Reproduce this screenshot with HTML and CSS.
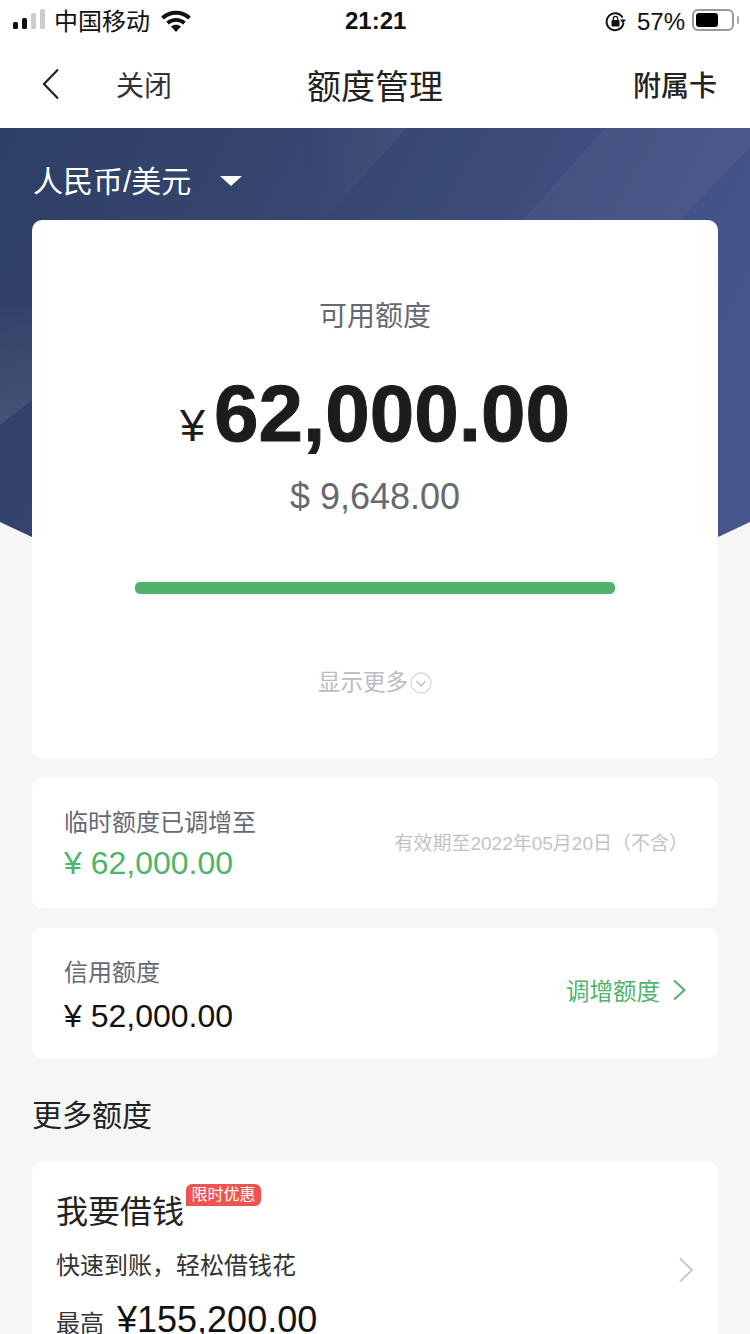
FILE: index.html
```html
<!DOCTYPE html>
<html lang="zh-CN">
<head>
    <meta charset="UTF-8">
    <meta name="viewport" content="width=device-width, initial-scale=1.0">
    <title>额度管理</title>
    <link rel="stylesheet" href="styles.css">
</head>
<body>
    <div class="status-bar">
        <div class="status-left">
            <div class="signal">
                <span class="bar bar-1"></span>
                <span class="bar bar-2"></span>
                <span class="bar bar-3"></span>
                <span class="bar bar-4"></span>
            </div>
            <span class="carrier">中国移动</span>
            <svg class="wifi" width="30" height="22" viewBox="0 0 30 22">
                <path d="M1.500 8C9 1 21 1 28.500 8" fill="none" stroke="#111" stroke-width="4"/>
                <path d="M6.500 13C11.500 8.800 18.500 8.800 23.500 13" fill="none" stroke="#111" stroke-width="3.800"/>
                <path d="M10 16.500C13 14 17 14 20 16.500L15 22Z" fill="#111"/>
            </svg>
        </div>
        <span class="time">21:21</span>
        <div class="status-right">
            <svg class="lock" width="21" height="21" viewBox="0 0 21 21">
                <path d="M17.500 6.500A8.500 8.500 0 1 0 18.500 12" fill="none" stroke="#111" stroke-width="2"/>
                <path d="M15 8.500H21L18 12.500Z" fill="#111"/>
                <rect x="6.500" y="9" width="8" height="6.500" rx="1" fill="#111"/>
                <path d="M8.300 9V7.500A2.200 2.200 0 0 1 12.700 7.500V9" fill="none" stroke="#111" stroke-width="1.300"/>
            </svg>
            <span class="percent">57%</span>
            <div class="battery"><span class="battery-level"></span></div>
            <span class="battery-nub"></span>
        </div>
    </div>

    <header class="nav">
        <div class="nav-left">
            <svg class="back" width="18" height="32" viewBox="0 0 18 32">
                <path d="M16 1.500L2 16L16 30.500" fill="none" stroke="#222" stroke-width="2.200"/>
            </svg>
            <span class="close">关闭</span>
        </div>
        <h1 class="nav-title">额度管理</h1>
        <div class="nav-right">附属卡</div>
    </header>

    <section class="banner">
        <svg class="banner-bg" width="750" height="486" viewBox="0 0 750 486">
            <defs>
                <linearGradient id="bannerFill" x1="0" y1="0" x2="1" y2="0.35">
                    <stop offset="0" stop-color="#2e3f65"/>
                    <stop offset="0.45" stop-color="#374771"/>
                    <stop offset="1" stop-color="#46558c"/>
                </linearGradient>
                <linearGradient id="facetSide" x1="0" y1="0" x2="1" y2="0">
                    <stop offset="0" stop-color="#fff" stop-opacity="0"/>
                    <stop offset="1" stop-color="#fff" stop-opacity="0.05"/>
                </linearGradient>
                <linearGradient id="facetLow" x1="0" y1="0" x2="0" y2="1">
                    <stop offset="0" stop-color="#fff" stop-opacity="0"/>
                    <stop offset="1" stop-color="#fff" stop-opacity="0.09"/>
                </linearGradient>
            </defs>
            <path d="M0 0H750V394Q375 578 0 394Z" fill="url(#bannerFill)"/>
            <path d="M300 0H407L323 92H300Z" fill="url(#facetSide)"/>
            <path d="M605 0H750V19L680 92H523Z" fill="#fff" opacity="0.04"/>
            <path d="M0 170H32V272L0 297Z" fill="url(#facetLow)"/>
        </svg>
        <div class="currency">
            <span>人民币/美元</span>
            <span class="currency-arrow"></span>
        </div>
    </section>

    <main class="content">
        <section class="card main-card">
            <div class="main-label">可用额度</div>
            <div class="main-amount"><span class="main-yen">¥</span>62,000.00</div>
            <div class="main-usd">$ 9,648.00</div>
            <div class="progress"></div>
            <div class="show-more">
                <span>显示更多</span>
                <svg width="22" height="22" viewBox="0 0 22 22">
                    <circle cx="11" cy="11" r="10" fill="none" stroke="#d9dadc" stroke-width="1.300"/>
                    <path d="M6.500 9L11 14L15.500 9" fill="none" stroke="#bbbcbf" stroke-width="1.300"/>
                </svg>
            </div>
        </section>

        <section class="card row-card">
            <div>
                <div class="row-label">临时额度已调增至</div>
                <div class="row-amount green">¥ 62,000.00</div>
            </div>
            <div class="row-note">有效期至2022年05月20日（不含）</div>
        </section>

        <section class="card row-card credit-card">
            <div>
                <div class="row-label">信用额度</div>
                <div class="row-amount credit-amount">¥ 52,000.00</div>
            </div>
            <div class="row-link">
                <span>调增额度</span>
                <svg width="14" height="22" viewBox="0 0 14 22">
                    <path d="M2 1.500L12.500 11L2 20.500" fill="none" stroke="#4fb36c" stroke-width="2"/>
                </svg>
            </div>
        </section>

        <h2 class="section-title">更多额度</h2>

        <section class="card loan-card">
            <div class="loan-head">
                <span class="loan-title">我要借钱</span>
                <span class="loan-badge">限时优惠</span>
            </div>
            <div class="loan-desc">快速到账，轻松借钱花</div>
            <div class="loan-max">
                <span class="loan-max-label">最高</span>
                <span class="loan-max-value">¥155,200.00</span>
            </div>
            <svg class="loan-arrow" width="16" height="26" viewBox="0 0 16 26">
                <path d="M2 1.500L14 13L2 24.500" fill="none" stroke="#c9c9cc" stroke-width="2"/>
            </svg>
        </section>
    </main>
</body>
</html>
```

FILE: styles.css
```css
html, body {
    margin: 0;
    padding: 0;
    height: 1334px;
    overflow: hidden;
}
body {
    font-family: "Liberation Sans", "Noto Sans CJK SC", sans-serif;
    background-color: #f6f6f6;
    color: #222;
}

/* status bar */
.status-bar {
    height: 40px;
    background: white;
    display: flex;
    align-items: center;
    justify-content: space-between;
    position: relative;
    font-size: 24px;
    color: #111;
}
.status-left {
    display: flex;
    align-items: center;
    padding-left: 13px;
}
.signal {
    display: flex;
    align-items: flex-end;
    height: 20px;
    gap: 4px;
    margin-top: -2px;
}
.bar {
    width: 5px;
    border-radius: 1.5px;
    background: #111;
}
.bar-1 { height: 7px; }
.bar-2 { height: 11px; }
.bar-3 { height: 16px; background: #ccc; }
.bar-4 { height: 20px; background: #ccc; }
.carrier {
    margin-left: 9px;
    margin-top: -2px;
}
.wifi {
    margin-left: 11px;
    margin-top: 1px;
}
.time {
    font-weight: bold;
    position: absolute;
    left: 345px;
    top: 7px;
}
.status-right {
    display: flex;
    align-items: center;
    padding-right: 11px;
}
.lock {
    margin-right: 11px;
    margin-top: 2px;
}
.percent {
    margin-right: 7px;
    margin-top: 4px;
}
.battery {
    box-sizing: border-box;
    width: 42px;
    height: 22px;
    padding: 2px;
    border: 2px solid #999;
    border-radius: 6px;
    display: flex;
}
.battery-level {
    width: 22px;
    background: #000;
    border-radius: 3px;
}
.battery-nub {
    width: 2px;
    height: 8px;
    margin-left: 3px;
    background: #aaa;
    border-radius: 1px;
}

/* nav */
.nav {
    height: 88px;
    background: white;
    display: grid;
    grid-template-columns: 1fr auto 1fr;
    align-items: center;
}
.nav-left {
    display: flex;
    align-items: center;
    padding-left: 42px;
}
.close {
    margin-left: 56px;
    font-size: 28px;
    color: #333;
}
.nav-title {
    margin: 0;
    font-size: 34px;
    font-weight: normal;
    color: #222;
}
.nav-right {
    text-align: right;
    padding-right: 33px;
    font-size: 28px;
    font-weight: 500;
    color: #222;
}

/* banner */
.banner {
    height: 92px;
    position: relative;
}
.banner-bg {
    position: absolute;
    left: 0;
    top: 0;
}
.currency {
    position: relative;
    padding: 31px 0 0 33px;
    display: flex;
    align-items: center;
    font-size: 30px;
    line-height: 46px;
    color: white;
}
.currency-arrow {
    margin: -2px 0 0 29px;
    border-left: 11px solid transparent;
    border-right: 11px solid transparent;
    border-top: 10px solid white;
}

/* cards */
.content {
    position: relative;
    padding: 0 32px;
}
.card {
    background: white;
    border-radius: 10px;
}
.main-card {
    height: 538px;
    box-sizing: border-box;
    padding-top: 77px;
    text-align: center;
}
.main-label {
    font-size: 28px;
    line-height: 40px;
    color: #666a70;
}
.main-amount {
    margin-top: 27px;
    font-size: 80px;
    line-height: 100px;
    font-weight: bold;
    color: #1c1c1c;
    -webkit-text-stroke: 1px #1c1c1c;
}
.main-yen {
    font-size: 45px;
    font-weight: normal;
    margin-right: 9px;
    -webkit-text-stroke: 0;
}
.main-usd {
    margin-top: -4px;
    font-size: 36px;
    line-height: 50px;
    color: #666a70;
}
.progress {
    width: 480px;
    height: 12px;
    margin: 60px auto 0;
    background: #52b26b;
    border-radius: 5px;
}
.show-more {
    margin-top: 77px;
    display: flex;
    justify-content: center;
    align-items: center;
    gap: 2px;
    font-size: 22.500px;
    line-height: 24px;
    color: #bbbcbf;
}
.row-card {
    height: 130px;
    box-sizing: border-box;
    margin-top: 20px;
    padding: 3px 32px 0;
    display: flex;
    align-items: center;
    justify-content: space-between;
}
.credit-card {
    padding-top: 5px;
}
.row-label {
    font-size: 24px;
    line-height: 36px;
    color: #666a70;
}
.row-amount {
    margin-top: 1px;
    font-size: 32px;
    line-height: 42px;
    color: #111;
}
.credit-amount {
    margin-top: 4px;
}
.green {
    color: #4fb36c;
}
.row-note {
    font-size: 19px;
    color: #c2c3c6;
    margin: 0 -2px 7px 0;
}
.row-link {
    display: flex;
    align-items: center;
    gap: 12px;
    margin-bottom: 11px;
    font-size: 23.500px;
    color: #4fb36c;
}
.section-title {
    margin: 38px 0 26px;
    font-size: 30px;
    line-height: 40px;
    font-weight: normal;
    color: #222;
}
.loan-card {
    position: relative;
    height: 300px;
    padding: 22px 24px 0;
}
.loan-head {
    display: flex;
    align-items: flex-start;
}
.loan-title {
    font-size: 32px;
    line-height: 56px;
    color: #222;
}
.loan-badge {
    margin-left: 2px;
    padding: 0 5.500px;
    height: 22px;
    line-height: 22px;
    font-size: 16px;
    color: white;
    background: #ef5350;
    border-radius: 6px 6px 6px 0;
}
.loan-desc {
    margin-top: 8px;
    font-size: 24px;
    line-height: 36px;
    color: #333;
}
.loan-max {
    margin-top: 15px;
    display: flex;
    align-items: baseline;
    gap: 13px;
}
.loan-max-label {
    font-size: 24px;
    color: #333;
}
.loan-max-value {
    font-size: 36px;
    color: #111;
}
.loan-arrow {
    position: absolute;
    right: 24px;
    top: 95px;
}
```
